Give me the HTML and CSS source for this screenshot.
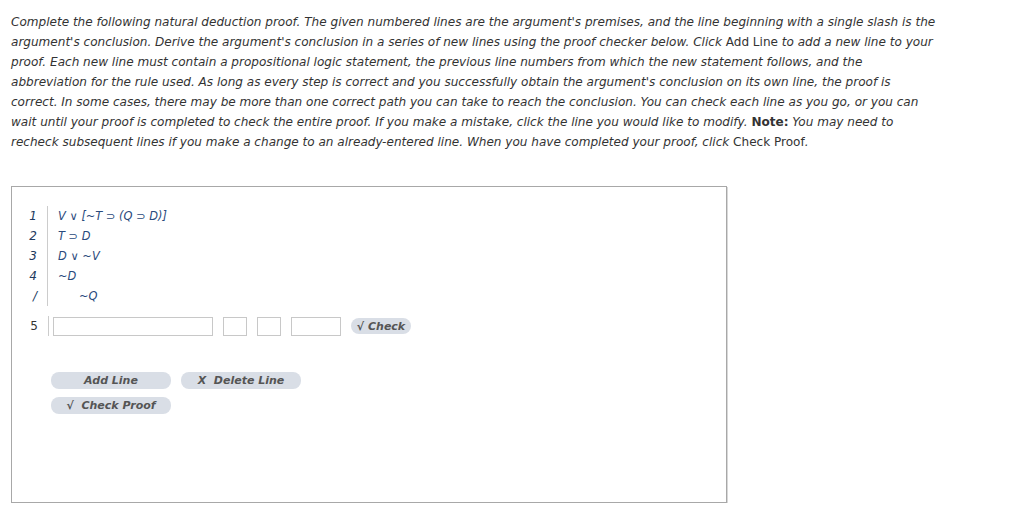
FILE: index.html
```html
<!DOCTYPE html>
<html>
<head>
<meta charset="utf-8">
<link rel="stylesheet" href="styles.css">
</head>
<body>
<p class="intro">Complete the following natural deduction proof. The given numbered lines are the argument's premises, and the line beginning with a single slash is the<br>argument's conclusion. Derive the argument's conclusion in a series of new lines using the proof checker below. Click <span class="up">Add Line</span> to add a new line to your<br>proof. Each new line must contain a propositional logic statement, the previous line numbers from which the new statement follows, and the<br>abbreviation for the rule used. As long as every step is correct and you successfully obtain the argument's conclusion on its own line, the proof is<br>correct. In some cases, there may be more than one correct path you can take to reach the conclusion. You can check each line as you go, or you can<br>wait until your proof is completed to check the entire proof. If you make a mistake, click the line you would like to modify. <b class="up">Note:</b> You may need to<br>recheck subsequent lines if you make a change to an already-entered line. When you have completed your proof, click <span class="up">Check Proof</span>.</p>

<div class="box">
  <div class="premises">
    <div class="row"><span class="num">1</span><span class="f">V <span class="op">∨</span> [~T <span class="op">⊃</span> (Q <span class="op">⊃</span> D)]</span></div>
    <div class="row"><span class="num">2</span><span class="f">T <span class="op">⊃</span> D</span></div>
    <div class="row"><span class="num">3</span><span class="f">D <span class="op">∨</span> ~V</span></div>
    <div class="row"><span class="num">4</span><span class="f">~D</span></div>
    <div class="row"><span class="num">/</span><span class="f concl">~Q</span></div>
  </div>
  <div class="entry">
    <span class="num n5">5</span>
    <div class="fields">
      <input class="in stmt" type="text">
      <input class="in small" type="text">
      <input class="in small" type="text">
      <input class="in rule" type="text">
      <span class="btn check">√ Check</span>
    </div>
  </div>
  <div class="actions">
    <span class="btn big">Add Line</span>
    <span class="btn big">X&nbsp; Delete Line</span>
    <span class="btn big">√&nbsp; Check Proof</span>
  </div>
</div>
</body>
</html>
```
FILE: styles.css
```css
body {
  margin: 0;
  padding: 12px 11px 0 11px;
  font-family: "DejaVu Sans", Verdana, sans-serif;
  background: #fff;
}
.intro {
  margin: 0;
  font-size: 12.05px;
  line-height: 20px;
  font-style: italic;
  color: #333;
  white-space: nowrap;
}
.up {
  font-style: normal;
}
.box {
  margin-top: 34px;
  width: 714px;
  height: 315px;
  border: 1px solid #a8a8a8;
  box-shadow: 1px 1px 0 #d8d8d8;
}
.premises {
  margin-top: 19px;
}
.row {
  display: flex;
  height: 20px;
  align-items: center;
}
.num {
  width: 25px;
  text-align: right;
  padding-right: 10px;
  border-right: 1px solid #ccc;
  font-size: 12px;
  font-style: italic;
  color: #223a5e;
  line-height: 20px;
  height: 20px;
  flex: none;
}
.f {
  padding-left: 10px;
  font-size: 11.4px;
  font-style: italic;
  color: #2a4a7c;
  white-space: nowrap;
}
.op {
  font-style: normal;
}
.concl {
  padding-left: 31px;
}
.entry {
  display: flex;
  align-items: center;
  margin-top: 10px;
  height: 20px;
}
.n5 {
  font-style: normal;
  color: #333;
  width: 26px;
}
.fields {
  display: flex;
  align-items: center;
  margin-left: 4px;
}
.in {
  box-sizing: border-box;
  height: 19px;
  border: 1px solid #c8c8c8;
  margin: 0 10px 0 0;
  padding: 0;
  background: #fff;
}
.stmt { width: 160px; }
.small { width: 24px; }
.rule { width: 50px; }
.btn {
  display: inline-flex;
  align-items: center;
  justify-content: center;
  background: #d9dee6;
  border-radius: 8px;
  color: #555;
  font-size: 11px;
  font-weight: bold;
  font-style: italic;
  white-space: nowrap;
}
.check {
  width: 60px;
  height: 16px;
}
.actions {
  display: flex;
  flex-wrap: wrap;
  width: 260px;
  column-gap: 10px;
  row-gap: 8px;
  margin: 36px 0 0 39px;
}
.big {
  width: 120px;
  height: 17px;
}
```
